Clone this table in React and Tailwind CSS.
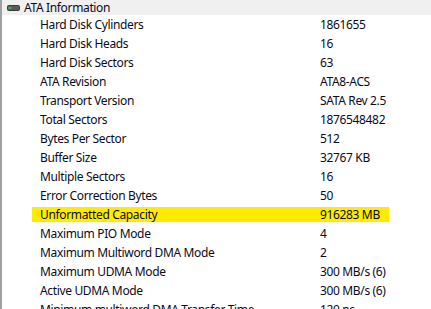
import React from "react";

const rows = [
  ["Hard Disk Cylinders", "1861655"],
  ["Hard Disk Heads", "16"],
  ["Hard Disk Sectors", "63"],
  ["ATA Revision", "ATA8-ACS"],
  ["Transport Version", "SATA Rev 2.5"],
  ["Total Sectors", "1876548482"],
  ["Bytes Per Sector", "512"],
  ["Buffer Size", "32767 KB"],
  ["Multiple Sectors", "16"],
  ["Error Correction Bytes", "50"],
  ["Unformatted Capacity", "916283 MB", true],
  ["Maximum PIO Mode", "4"],
  ["Maximum Multiword DMA Mode", "2"],
  ["Maximum UDMA Mode", "300 MB/s (6)"],
  ["Active UDMA Mode", "300 MB/s (6)"],
  ["Minimum multiword DMA Transfer Time", "120 ns"],
];

function DriveIcon() {
  return (
    <svg width="13" height="6" viewBox="0 0 13 6" className="shrink-0">
      <rect x="0.5" y="0.5" width="12" height="5" rx="1" fill="#5a5a5a" stroke="#3c3c3c" />
      <rect x="1.5" y="2" width="3" height="2" fill="#27c24a" />
    </svg>
  );
}

export default function App() {
  return (
    <div
      className="w-[431px] h-[309px] overflow-hidden bg-white flex flex-col border-l-2 border-[#a0a0a0] text-[12px] tracking-[-0.35px] text-[#0b0b20]"
      style={{ fontFamily: '"Noto Sans", "Open Sans", sans-serif' }}
    >
      <div className="h-[15px] shrink-0 bg-[#f0f0f0] flex items-center pl-[5px]">
        <DriveIcon />
        <span className="ml-[4px] leading-[15px]">ATA Information</span>
      </div>
      {rows.map(([label, value, hl]) => (
        <div key={label} className="h-[19px] shrink-0 flex items-center">
          <div
            className={
              "flex items-center h-[15px] ml-[30px] w-[357px] " +
              (hl ? "bg-[#ffeb00]" : "")
            }
          >
            <span className="w-[288px] pl-[8px] shrink-0 whitespace-nowrap leading-[15px]">
              {label}
            </span>
            <span className="whitespace-nowrap leading-[15px]">{value}</span>
          </div>
        </div>
      ))}
    </div>
  );
}
